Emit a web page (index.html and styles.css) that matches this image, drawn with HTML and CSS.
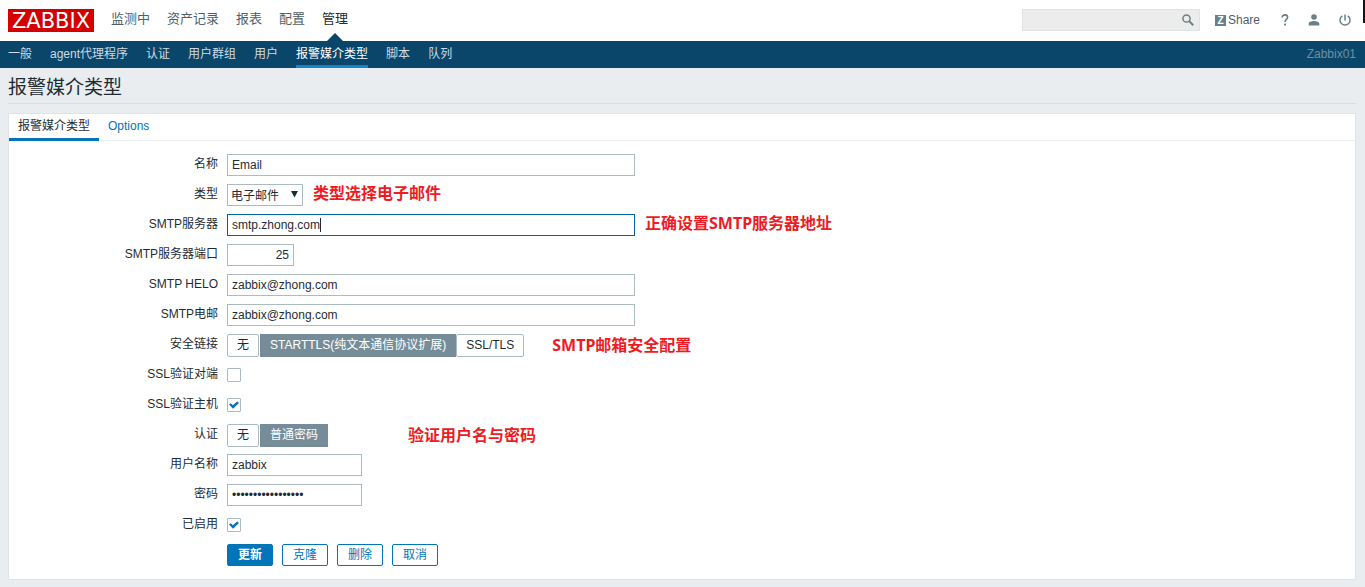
FILE: index.html
```html
<!DOCTYPE html>
<html lang="zh-CN">
<head>
<meta charset="utf-8">
<title>报警媒介类型</title>
<link rel="stylesheet" href="styles.css">
</head>
<body>
<header class="top">
  <a class="logo" href="#">ZABBIX</a>
  <nav class="main-nav">
    <a href="#">监测中</a>
    <a href="#">资产记录</a>
    <a href="#">报表</a>
    <a href="#">配置</a>
    <a href="#" class="current">管理</a>
  </nav>
  <form class="search" role="search">
    <input type="text" aria-label="搜索">
    <button type="button" aria-label="搜索">
      <svg width="12" height="12" viewBox="0 0 12 12" fill="none" stroke="#6b7f8a"><circle cx="4.5" cy="4.5" r="3.6" stroke-width="1.5"/><path d="M7.3 7.3l3.9 3.9" stroke-width="2"/></svg>
    </button>
  </form>
  <div class="tools">
    <a class="share" href="#"><span class="share-mark">Z</span>Share</a>
    <a href="#" aria-label="帮助"><svg width="8" height="12" viewBox="0 0 8 12"><path d="M1.2 3.4C1.2 1.8 2.3.9 3.9.9s2.7.9 2.7 2.4c0 2-2.6 2.3-2.6 4.8" fill="none" stroke="#6b7f8a" stroke-width="1.6"/><rect x="3.1" y="9.6" width="1.9" height="1.9" fill="#6b7f8a"/></svg></a>
    <a href="#" aria-label="用户"><svg width="12" height="12" viewBox="0 0 12 12" fill="#6b7f8a"><circle cx="6" cy="3" r="2.8"/><path d="M.7 11.4V9.7C.7 7.9 3.6 7 6 7s5.3.9 5.3 2.7v1.7z"/></svg></a>
    <a href="#" aria-label="退出"><svg width="12" height="12" viewBox="0 0 12 12" fill="none" stroke="#6b7f8a" stroke-width="1.5"><path d="M6 .4v6M3.3 1.9a5 5 0 1 0 5.4 0"/></svg></a>
  </div>
  <span class="edge"></span>
</header>
<nav class="sub-nav">
  <a href="#">一般</a>
  <a href="#">agent代理程序</a>
  <a href="#">认证</a>
  <a href="#">用户群组</a>
  <a href="#">用户</a>
  <a href="#" class="current">报警媒介类型</a>
  <a href="#">脚本</a>
  <a href="#">队列</a>
  <span class="server">Zabbix01</span>
</nav>
<main>
  <h1>报警媒介类型</h1>
  <section class="panel">
    <div class="tabs">
      <a href="#" class="current">报警媒介类型</a>
      <a href="#">Options</a>
    </div>
    <form class="form">
      <div class="row"><label for="name">名称</label><div class="field"><input class="text wide" id="name" type="text" value="Email"></div></div>
      <div class="row"><label for="type">类型</label><div class="field">
        <span class="select"><select id="type"><option>电子邮件</option></select><svg width="7" height="7" viewBox="0 0 7 7"><path d="M0 0h7L3.5 6.5z" fill="#1f2c33"/></svg></span>
        <strong class="note note-raised">类型选择电子邮件</strong></div></div>
      <div class="row"><label for="server">SMTP服务器</label><div class="field"><span class="editing"><input class="text wide active" id="server" type="text" value="smtp.zhong.com"><span class="caret"></span></span><strong class="note note-raised">正确设置SMTP服务器地址</strong></div></div>
      <div class="row"><label for="port">SMTP服务器端口</label><div class="field"><input class="text port" id="port" type="text" value="25"></div></div>
      <div class="row"><label for="helo">SMTP HELO</label><div class="field"><input class="text wide" id="helo" type="text" value="zabbix@zhong.com"></div></div>
      <div class="row"><label for="mail">SMTP电邮</label><div class="field"><input class="text wide" id="mail" type="text" value="zabbix@zhong.com"></div></div>
      <div class="row"><span class="caption" id="security">安全链接</span><div class="field">
        <div class="segments" role="radiogroup" aria-labelledby="security">
          <label><input type="radio" name="security"><span>无</span></label>
          <label><input type="radio" name="security" checked><span>STARTTLS(纯文本通信协议扩展)</span></label>
          <label><input type="radio" name="security"><span>SSL/TLS</span></label>
        </div><strong class="note note-security">SMTP邮箱安全配置</strong></div></div>
      <div class="row"><label for="peer">SSL验证对端</label><div class="field"><input class="check" id="peer" type="checkbox"></div></div>
      <div class="row"><label for="host">SSL验证主机</label><div class="field"><input class="check" id="host" type="checkbox" checked></div></div>
      <div class="row"><span class="caption" id="auth">认证</span><div class="field">
        <div class="segments" role="radiogroup" aria-labelledby="auth">
          <label><input type="radio" name="auth"><span>无</span></label>
          <label><input type="radio" name="auth" checked><span>普通密码</span></label>
        </div><strong class="note note-auth">验证用户名与密码</strong></div></div>
      <div class="row"><label for="user">用户名称</label><div class="field"><input class="text short" id="user" type="text" value="zabbix"></div></div>
      <div class="row"><label for="password">密码</label><div class="field"><input class="text short" id="password" type="password" value="12345678901234567"></div></div>
      <div class="row"><label for="enabled">已启用</label><div class="field"><input class="check" id="enabled" type="checkbox" checked></div></div>
      <div class="row"><span></span><div class="field actions">
        <button type="button" class="primary">更新</button>
        <button type="button">克隆</button>
        <button type="button">删除</button>
        <button type="button">取消</button>
      </div></div>
    </form>
  </section>
</main>
</body>
</html>
```
FILE: styles.css
```css
* { box-sizing: border-box; }
body {
  margin: 0;
  background: #e9edf0;
  color: #1f2c33;
  font: 12px/18px "Liberation Sans", "Noto Sans CJK SC", sans-serif;
}
a { text-decoration: none; color: inherit; }
input, select, button { font: inherit; color: inherit; margin: 0; }
svg { display: block; }

.top {
  position: relative;
  display: flex;
  align-items: center;
  height: 41px;
  padding: 0 14px 0 8px;
  background: #fff;
}
.logo {
  width: 86px;
  padding-top: 1px;
  background: #d40000;
  color: #fff;
  font: 21px/22px "DejaVu Sans", sans-serif;
  text-align: center;
}
.main-nav {
  display: flex;
  gap: 17px;
  margin-left: 17px;
  color: #4f5f69;
  font-size: 13px;
}
.main-nav a { height: 41px; line-height: 38px; }
.main-nav .current { position: relative; color: #1f2c33; }
.main-nav .current::after {
  content: "";
  position: absolute;
  bottom: 0;
  left: 50%;
  margin-left: -8px;
  border: 8px solid transparent;
  border-top: 0;
  border-bottom-color: #0a466a;
}
.search {
  display: flex;
  width: 178px;
  height: 22px;
  margin: 0 0 1px auto;
  background: #ececec;
  border: 1px solid #e0e3e4;
}
.search input { flex: 1; min-width: 0; border: 0; background: none; }
.search button { padding: 0 5px; border: 0; background: none; }
.tools {
  display: flex;
  align-items: center;
  gap: 19px;
  margin: 0 0 1px 15px;
  color: #4f5f69;
}
.share { display: flex; align-items: center; gap: 2px; margin-right: 2px; }
.share-mark {
  width: 11px;
  background: #6b7f8a;
  color: #fff;
  font-size: 10px;
  font-weight: bold;
  line-height: 11px;
  text-align: center;
}
.edge { position: absolute; top: 0; right: 0; width: 2px; height: 23px; background: #12121f; }

.sub-nav {
  display: flex;
  gap: 18px;
  height: 27px;
  padding: 0 9px 0 8px;
  background: #0a466a;
  color: #cfdbe2;
  line-height: 26px;
}
.sub-nav .current { color: #fff; border-bottom: 3px solid #1385cc; }
.server { margin-left: auto; color: #6f8fa3; }

main { padding: 0 9px 8px 8px; }
h1 {
  margin: 0 0 9px;
  padding: 6px 0 1px;
  border-bottom: 1px solid #dcdfe1;
  font-size: 19px;
  font-weight: normal;
  line-height: 28px;
}
.panel { background: #fff; border: 1px solid #dfe4e7; }
.tabs { display: flex; height: 27px; border-bottom: 1px solid #ebeef0; line-height: 24px; }
.tabs a { height: 27px; padding: 0 9px; color: #0275b8; }
.tabs .current { color: #1f2c33; border-bottom: 3px solid #0275b8; }

.form { padding: 9px 0; }
.row { display: grid; grid-template-columns: 209px 1fr; gap: 9px; height: 30px; }
.row > label, .caption { text-align: right; line-height: 28px; }
.field { display: flex; align-items: center; }
.text {
  height: 22px;
  padding: 0 4px;
  border: 1px solid #acbbc2;
  border-radius: 0;
  background: #fff;
  outline: none;
}
.wide { width: 408px; }
.short { width: 135px; }
.port { width: 67px; text-align: right; }
.active { border-color: #00659c; }
.editing { position: relative; display: flex; }
.caret { position: absolute; left: 93px; top: 4px; width: 1px; height: 14px; background: #1f2c33; }
.select { position: relative; }
.select select {
  display: block;
  width: 76px;
  height: 22px;
  padding: 1px 3px 0;
  border: 1px solid #acbbc2;
  border-radius: 0;
  background: #fff;
  appearance: none;
}
.select svg { position: absolute; right: 5px; top: 7px; pointer-events: none; }
.note {
  margin-left: 10px;
  color: #ed1c24;
  font: bold 16px/22px "Noto Sans", "Noto Sans CJK SC", sans-serif;
}
.note-raised { padding-bottom: 4px; }
.note-security { margin-left: 28px; }
.note-auth { margin-left: 80px; }

.segments { display: flex; }
.segments label { position: relative; }
.segments input { position: absolute; opacity: 0; }
.segments span {
  display: block;
  height: 23px;
  padding: 0 9px;
  border: 1px solid #acbbc2;
  border-radius: 2px;
  line-height: 20px;
}
.segments label:first-child { margin-right: 1px; }
.segments :checked + span { background: #768d99; border-color: #768d99; border-radius: 0; color: #fff; }

.check {
  display: grid;
  place-items: center;
  width: 14px;
  height: 14px;
  border: 1px solid #acbbc2;
  border-radius: 1px;
  background: #fff;
  appearance: none;
}
.check:checked::before {
  content: "";
  width: 10px;
  height: 8px;
  background: #0275b8;
  clip-path: polygon(0 45%, 18% 28%, 38% 54%, 82% 6%, 100% 24%, 40% 98%);
}

.actions { gap: 9px; }
.actions button {
  height: 22px;
  padding: 0 10px;
  border: 1px solid #0275b8;
  border-radius: 2px;
  background: #fff;
  color: #0275b8;
  line-height: 20px;
}
.actions .primary { background: #0275b8; color: #fff; font-weight: bold; }
```
